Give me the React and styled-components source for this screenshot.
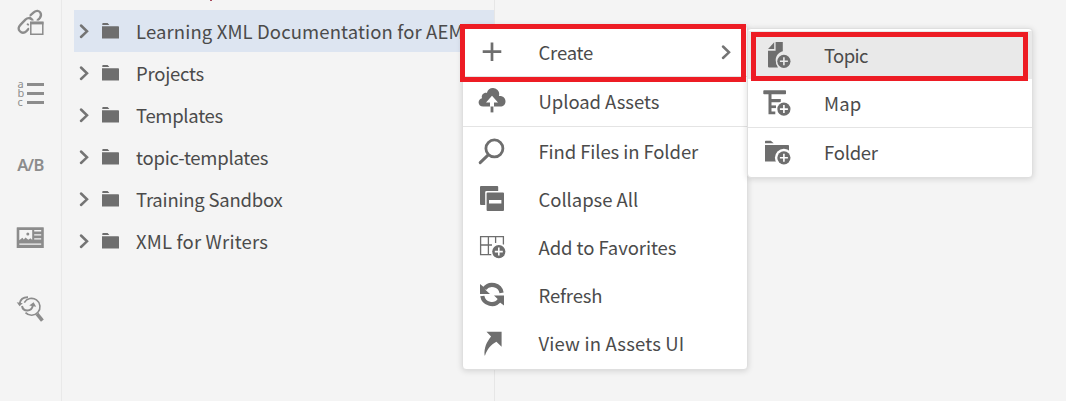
import React from "react";
import styled, { createGlobalStyle } from "styled-components";

const Global = createGlobalStyle`
  body { margin: 0; background: #f4f4f4; }
  * { box-sizing: border-box; }
`;

const Screen = styled.div`
  position: relative;
  display: flex;
  width: 1066px;
  height: 401px;
  overflow: hidden;
  background: #f4f4f4;
  color: #4b4b4b;
  font-family: "Noto Sans CJK SC", "Noto Sans", sans-serif;
  font-size: 18.5px;
`;

const Rail = styled.nav`
  width: 62px;
  flex: none;
  border-right: 1px solid #e9e9e9;
  display: flex;
  flex-direction: column;
  align-items: center;
  padding-top: 6px;
  gap: 40px;
  color: #8c8c8c;
`;

const Icon = styled.svg`
  display: block;
  flex: none;
  overflow: visible;
  width: ${(p) => p.$w || 32}px;
  height: ${(p) => p.$h || 32}px;
`;

const Tree = styled.section`
  width: 433px;
  flex: none;
  border-right: 1px solid #e6e6e6;
  padding: 10px 0 0 12px;
`;

const TreeRow = styled.div`
  height: 42px;
  display: flex;
  align-items: center;
  padding-left: 5px;
  background: ${(p) => (p.$selected ? "#dde5f1" : "transparent")};
`;

const Label = styled.span`
  white-space: nowrap;
  line-height: 26px;
  letter-spacing: ${(p) => p.$track || 0}px;
`;

const TreeLabel = styled(Label)`
  margin-left: 16px;
`;

const MenuPanel = styled.div`
  position: absolute;
  left: ${(p) => p.$x}px;
  top: ${(p) => p.$y}px;
  width: ${(p) => p.$w}px;
  background: #fff;
  border: 1px solid #dfdfdf;
  border-radius: 4px;
  box-shadow: 0 1px 6px rgba(0, 0, 0, 0.14);
  padding: 2px 0 1px;
`;

const MenuRow = styled.div`
  height: 48px;
  display: flex;
  align-items: center;
  padding-left: ${(p) => p.$indent}px;
  background: ${(p) => (p.$active ? "#e9e9e9" : "transparent")};
`;

const MenuLabel = styled(Label)`
  margin-left: ${(p) => p.$gap}px;
  padding-bottom: ${(p) => p.$lift || 0}px;
  flex: 1;
`;

const Rule = styled.div`
  height: 1px;
  margin-top: ${(p) => p.$before || 0}px;
  margin-bottom: ${(p) => p.$after || 0}px;
  background: #e4e4e4;
`;

const Highlight = styled.div`
  position: absolute;
  left: ${(p) => p.$x}px;
  top: ${(p) => p.$y}px;
  width: ${(p) => p.$w}px;
  height: ${(p) => p.$h}px;
  border: 5px solid #ed1c24;
`;

const ErrorMark = styled.i`
  position: absolute;
  left: 210px;
  top: 0;
  width: 2px;
  height: 1px;
  background: #a94a5c;
`;

const Chevron = () => (
  <Icon $w={11} $h={16} viewBox="0 0 11 16">
    <path d="M2 2.5 8 8.3 2 14" fill="none" stroke="#747474" strokeWidth="2.5" strokeLinecap="round" />
  </Icon>
);

const FolderIcon = () => (
  <Icon $w={18} $h={18} viewBox="0 0 18 18">
    <path d="M0.3 3V1.8Q.3 1 1.1 1H5.6L7.4 3ZM0 4.3H16.2Q17 4.3 17 5.1V16.4H0Z" fill="#6e6e6e" />
  </Icon>
);

const FolderSlot = styled.div`
  margin-left: 12px;
  width: 18px;
  padding-bottom: 1px;
`;

const ChevronSlot = styled.div`
  width: 11px;
`;

const SubmenuArrow = styled.div`
  padding-right: 15px;
`;

const G = "#6e6e6e";

const PlusBadge = ({ x, y, bg = "#fff" }) => (
  <g>
    <circle cx={x} cy={y} r="7.9" fill={bg} />
    <circle cx={x} cy={y} r="6.6" fill={G} />
    <path d={`M${x - 4} ${y}H${x + 4}M${x} ${y - 4}V${y + 4}`} stroke={bg} strokeWidth="1.6" />
  </g>
);

const drawings = {
  plus: <path d="M16 6.5V25M6.7 15.7H25.3" stroke={G} strokeWidth="2.7" />,
  upload: (
    <g transform="translate(0 -1)">
      <path d="M7.2 22.5C4.5 22.5 2.6 20.7 2.6 18.4C2.6 16.1 4.1 14.7 6 14.2C5 11.1 7.6 8.4 10.9 8.9C11.7 5.4 14.8 3.6 18 4.2C21.8 4.9 24 8 23 12C26.7 11.6 29.5 13.9 29.5 17.2C29.5 20.5 27.2 22.5 24.4 22.5Z" fill={G} />
      <path d="M16 11.8 22 18.5H18V22.8H14V18.5H10Z" fill="#fff" />
      <path d="M14.4 19H17.6V28.3H14.4Z" fill="#fff" />
      <path d="M16 22.5V28.4" stroke={G} strokeWidth="2.8" />
    </g>
  ),
  search: (
    <g fill="none" stroke={G}>
      <circle cx="18.4" cy="12.4" r="8.5" strokeWidth="2.8" />
      <path d="M12 19.2 4.2 26.6" strokeWidth="3" strokeLinecap="round" />
    </g>
  ),
  collapse: (
    <g fill={G}>
      <path d="M5 2H21.2Q22.2 2 22.2 3V7H10.5Q9.2 7 9.2 8.3V21H5Q4 21 4 20V3Q4 2 5 2Z" />
      <path d="M11.6 8.6H27Q28 8.6 28 9.6V26Q28 27 27 27H11.6Q10.6 27 10.6 26V9.6Q10.6 8.6 11.6 8.6ZM13 16V19.4H25.4V16Z" fillRule="evenodd" />
    </g>
  ),
  favorites: (
    <g>
      <path d="M4.6 4.6H27.4V12.5M4.6 4V22.6H15.5M12.4 4V22.6M19.6 4V11M4.6 13H16" fill="none" stroke={G} strokeWidth="1.3" />
      <PlusBadge x={22.8} y={19.6} />
    </g>
  ),
  refresh: (
    <g>
      <path d="M8.4 8.8A9.6 9.6 0 0 1 25.6 12.8M23.6 20A9.6 9.6 0 0 1 6.3 16" fill="none" stroke={G} strokeWidth="4.2" />
      <path d="M4 4 8 7.2 9.6 9.9 14 14H4ZM28 25.6V15.6H18L22.2 19.6 24 22.4Z" fill={G} />
    </g>
  ),
  open: <path d="M12.4 4.3H27.5V19.4L22.3 14.4C16.5 17.5 13.4 21.5 10.9 28H10.5C9.8 20.5 12.6 14.6 17 9.2Z" transform="translate(-1.9 -.6)" fill={G} />,
  topic: (
    <g>
      <path d="M10.6 3H17.8V12.3C13.6 13.4 10.6 17 10.7 21.3Q10.7 25 13 28.4H3.8Q3 28.4 3 27.6V11.7H10.6Z" fill={G} />
      <path d="M3.1 9.9 9.2 3.2V9.9Z" fill={G} />
      <PlusBadge x={18.9} y={22.3} bg="#e9e9e9" />
    </g>
  ),
  map: (
    <g fill={G} transform="translate(0 1.2)">
      <path d="M-1.7 2.8Q-1.7 2 -.9 2H20.2Q21 2 21 2.8V5.2Q21 6 20.2 6H6.5V10.9H15.8V14H6.5V23.2H10.3V26H3.5V6H-.9Q-1.7 6-1.7 5.2Z" />
      <path d="M6 17.2H11V19.9H6Z" />
      <PlusBadge x={18.9} y={20.9} />
    </g>
  ),
  folder: (
    <g fill={G} transform="translate(0 1)">
      <path d="M0 6.3V4.5Q0 3.7.8 3.7H5.8L8.7 6.3ZM0 8.1H23.2Q24 8.1 24 8.9V24.5H0Z" />
      <circle cx="18.9" cy="20.8" r="9" fill="#fff" />
      <path d="M24 12.5H29V20H24Z" fill="#fff" />
      <PlusBadge x={18.9} y={20.8} />
    </g>
  ),
};

const LinkPanelIcon = () => (
  <Icon viewBox="0 0 32 32">
    <g fill="none" stroke="#8c8c8c" strokeWidth="2.3" strokeLinecap="round">
      <path d="M15.6 9.2 19 6.2C21.3 4 24 4.6 25.2 6.4C26.6 8.5 26.2 10.2 24.8 12L22.6 14.4" />
      <path d="M17.6 14.2C15.2 11.6 12.5 11.6 10.4 13.6L5.4 18.9C3.3 21.2 3.2 23.6 4.9 25.3C6.8 27.2 9.6 26.9 11.8 24.8L13.6 22.9" />
      <path d="M12.6 18.3 13.4 18.6M14.9 11.4 17 13.4" strokeWidth="1.9" />
    </g>
    <path d="M14.2 14.6H29V29.4H14.2Z" fill="#f4f4f4" />
    <path d="M15.8 16.5H27.8V28.2H15.8Z" fill="none" stroke="#8c8c8c" strokeWidth="1.5" />
    <path d="M15 15.6H28.5V18.4H15Z" fill="#8c8c8c" />
  </Icon>
);

const ListGlyphs = styled.div`
  width: 26px;
  height: 32px;
  display: flex;
  align-items: center;
  gap: 3px;
`;
const Letters = styled.div`
  display: flex;
  flex-direction: column;
  width: 6px;
  font: 11px/9px "Noto Sans", sans-serif;
  padding-bottom: 4px;
`;
const Bars = styled.div`
  display: flex;
  flex-direction: column;
  gap: 6px;
  padding-bottom: 1px;
`;
const Bar = styled.div`
  width: 17px;
  height: 3px;
  background: #8c8c8c;
`;

const Compare = styled.div`
  height: 32px;
  font: 600 16.5px/30px "Noto Sans", sans-serif;
  letter-spacing: -0.6px;
`;

const MediaIcon = () => (
  <Icon viewBox="0 0 32 32">
    <path d="M2.3 5.2H28.2Q28.8 5.2 28.8 5.8V26H1.7V5.8Q1.7 5.2 2.3 5.2Z" fill="#8c8c8c" />
    <path d="M4.3 8.1H17.2V17.9L15.5 16.2 13.3 17.7 10.5 15.4 8.8 17.4 7.4 15.7 4.3 18.3ZM19.2 8.1H26.2V9.4H19.2ZM19.2 12.2H26.2V13.5H19.2ZM19.2 16.2H26.2V17.5H19.2ZM4.3 21.4H26.2V22.8H4.3Z" fill="#f4f4f4" />
    <circle cx="12.8" cy="12" r="1.5" fill="#8c8c8c" />
  </Icon>
);

const FindReplaceIcon = () => (
  <Icon viewBox="0 0 32 32">
    <g fill="none" stroke="#8c8c8c">
      <path d="M9.3 8.6A8.4 8.4 0 1 1 10.5 18.6" strokeWidth="1.6" />
      <path d="M22 19.8 27.4 26.6" strokeWidth="3.6" />
      <path d="M13 3.3C8 3.2 5.4 5.4 4.7 9.4" strokeWidth="1.9" />
      <path d="M7 12C8 17.6 16.4 18.6 17.9 11.4" strokeWidth="2" />
    </g>
    <path d="M1.7 8.3 7.8 9.2 4.6 12.2ZM14.2 11.6 18.6 8.3 21.2 12.8Z" fill="#8c8c8c" />
  </Icon>
);

const treeItems = [
  { text: "Learning XML Documentation for AEM", selected: true, track: 0.12 },
  { text: "Projects", track: -0.25 },
  { text: "Templates", track: -0.3 },
  { text: "topic-templates", track: -0.25 },
  { text: "Training Sandbox", track: -0.23 },
  { text: "XML for Writers", track: 0.18 },
];

const MenuItem = ({ icon, text, active, submenu, indent = 13, gap = 30.5, lift, track }) => (
  <MenuRow $active={active} $indent={indent}>
    <Icon viewBox="0 0 32 32">{drawings[icon]}</Icon>
    <MenuLabel $gap={gap} $lift={lift} $track={track}>{text}</MenuLabel>
    {submenu && <SubmenuArrow><Chevron /></SubmenuArrow>}
  </MenuRow>
);

export default function App() {
  return (
    <Screen>
      <Global />
      <Rail>
        <LinkPanelIcon />
        <ListGlyphs>
          <Letters><span>a</span><span>b</span><span>c</span></Letters>
          <Bars><Bar /><Bar /><Bar /></Bars>
        </ListGlyphs>
        <Compare>A/B</Compare>
        <MediaIcon />
        <FindReplaceIcon />
      </Rail>
      <Tree>
        {treeItems.map((item) => (
          <TreeRow key={item.text} $selected={item.selected}>
            <ChevronSlot><Chevron /></ChevronSlot>
            <FolderSlot><FolderIcon /></FolderSlot>
            <TreeLabel $track={item.track}>{item.text}</TreeLabel>
          </TreeRow>
        ))}
      </Tree>
      <ErrorMark />
      <MenuPanel $x={462} $y={25} $w={286}>
        <MenuItem icon="plus" text="Create" submenu track={-0.2} />
        <Rule />
        <MenuItem icon="upload" text="Upload Assets" track={-0.06} />
        <Rule $before={1} $after={1} />
        <MenuItem icon="search" text="Find Files in Folder" lift={2} track={-0.1} />
        <MenuItem icon="collapse" text="Collapse All" lift={2} track={-0.05} />
        <MenuItem icon="favorites" text="Add to Favorites" lift={2} track={-0.07} />
        <MenuItem icon="refresh" text="Refresh" lift={2} track={-0.15} />
        <MenuItem icon="open" text="View in Assets UI" lift={2} track={0.17} />
      </MenuPanel>
      <MenuPanel $x={747} $y={28} $w={286}>
        <MenuItem icon="topic" text="Topic" active indent={17} gap={27} track={-0.6} />
        <MenuItem icon="map" text="Map" indent={17} gap={27} track={0.2} />
        <Rule />
        <MenuItem icon="folder" text="Folder" indent={17} gap={27} track={-0.25} />
      </MenuPanel>
      <Highlight $x={460} $y={24} $w={286} $h={58} />
      <Highlight $x={751} $y={32} $w={277} $h={49} />
    </Screen>
  );
}
